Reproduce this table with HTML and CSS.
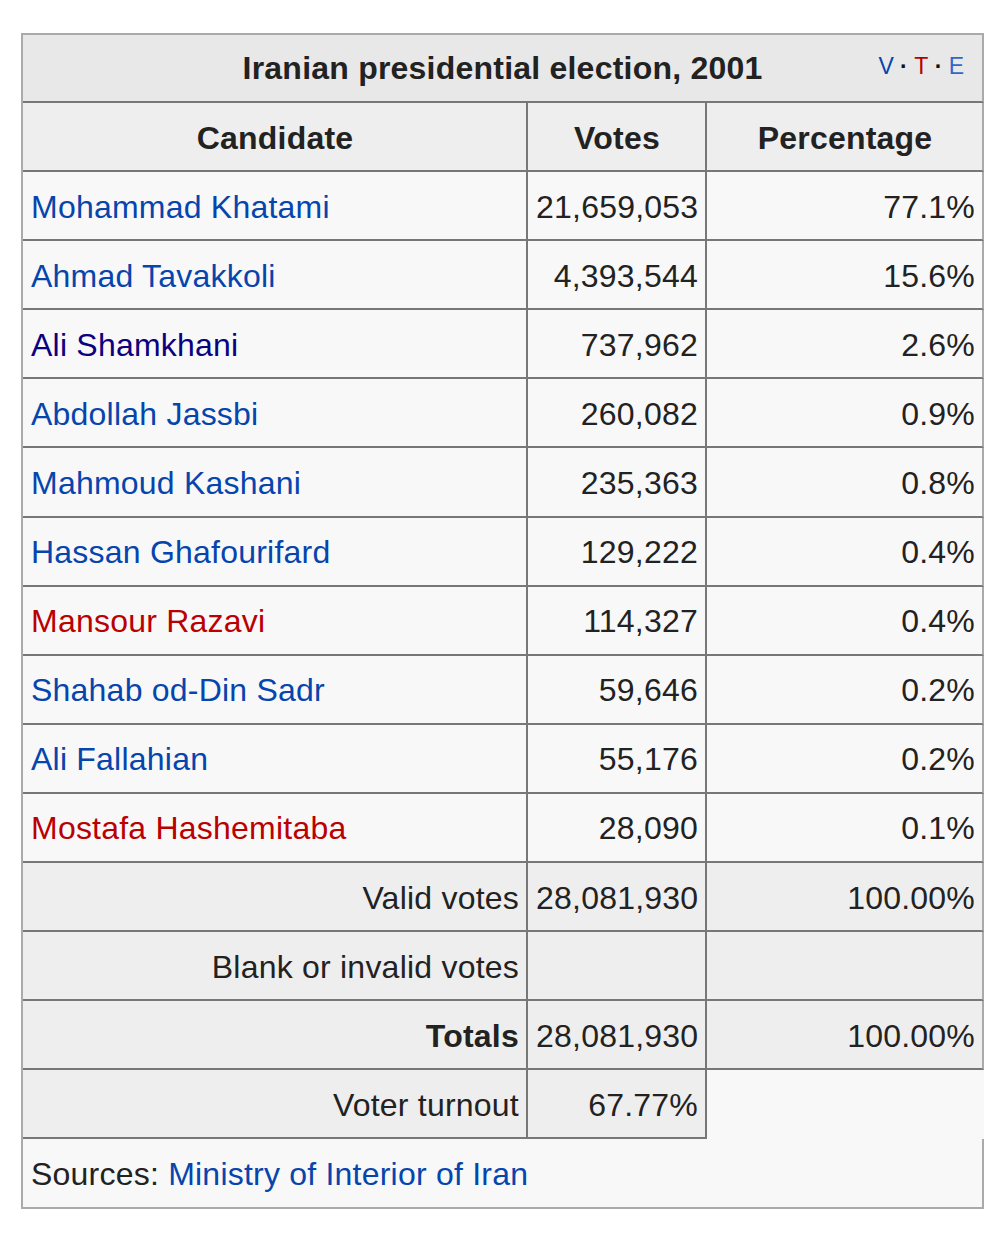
FILE: index.html
```html
<!DOCTYPE html>
<html lang="en">
<head>
<meta charset="utf-8">
<title>Iranian presidential election, 2001</title>
<link rel="stylesheet" href="styles.css">
</head>
<body>
<table class="results">
  <colgroup>
    <col class="c-cand">
    <col class="c-votes">
    <col class="c-pct">
  </colgroup>
  <tr class="title-row">
    <th colspan="3" class="title-cell">
      <div class="title-grid">
        <span class="title-text">Iranian presidential election, 2001</span>
        <span class="navbar"><a class="nv-v">V</a><b class="dot">·</b><a class="nv-t">T</a><b class="dot">·</b><a class="nv-e">E</a></span>
      </div>
    </th>
  </tr>
  <tr class="head-row">
    <th class="mid">Candidate</th>
    <th class="mid">Votes</th>
    <th class="mid last">Percentage</th>
  </tr>
  <tr class="body-row"><td><a class="link">Mohammad Khatami</a></td><td class="num">21,659,053</td><td class="num last">77.1%</td></tr>
  <tr class="body-row"><td><a class="link">Ahmad Tavakkoli</a></td><td class="num">4,393,544</td><td class="num last">15.6%</td></tr>
  <tr class="body-row"><td><a class="link visited">Ali Shamkhani</a></td><td class="num">737,962</td><td class="num last">2.6%</td></tr>
  <tr class="body-row"><td><a class="link">Abdollah Jassbi</a></td><td class="num">260,082</td><td class="num last">0.9%</td></tr>
  <tr class="body-row"><td><a class="link">Mahmoud Kashani</a></td><td class="num">235,363</td><td class="num last">0.8%</td></tr>
  <tr class="body-row"><td><a class="link">Hassan Ghafourifard</a></td><td class="num">129,222</td><td class="num last">0.4%</td></tr>
  <tr class="body-row"><td><a class="link new">Mansour Razavi</a></td><td class="num">114,327</td><td class="num last">0.4%</td></tr>
  <tr class="body-row"><td><a class="link">Shahab od-Din Sadr</a></td><td class="num">59,646</td><td class="num last">0.2%</td></tr>
  <tr class="body-row"><td><a class="link">Ali Fallahian</a></td><td class="num">55,176</td><td class="num last">0.2%</td></tr>
  <tr class="body-row"><td><a class="link new">Mostafa Hashemitaba</a></td><td class="num">28,090</td><td class="num last">0.1%</td></tr>
  <tr class="sum-row"><td class="num">Valid votes</td><td class="num">28,081,930</td><td class="num last">100.00%</td></tr>
  <tr class="sum-row"><td class="num">Blank or invalid votes</td><td class="num"></td><td class="num last"></td></tr>
  <tr class="sum-row"><td class="num"><b>Totals</b></td><td class="num">28,081,930</td><td class="num last">100.00%</td></tr>
  <tr class="sum-row"><td class="num">Voter turnout</td><td class="num">67.77%</td><td class="blank"></td></tr>
  <tr class="src-row">
    <td colspan="3" class="src-cell">Sources: <a class="link">Ministry of Interior of Iran</a></td>
  </tr>
</table>
</body>
</html>
```

FILE: styles.css
```css
html, body {
  margin: 0;
  padding: 0;
  background: #ffffff;
}

body {
  font-family: "Liberation Sans", Arial, sans-serif;
  font-size: 32px;
  color: #222222;
  letter-spacing: 0.22px;
}

.results {
  border-collapse: separate;
  border-spacing: 0;
  margin: 33px 0 0 21px;
  width: 963px;
  table-layout: fixed;
  background: #f8f8f8;
  border-top: 2px solid #aaaaaa;
  border-left: 2px solid #aaaaaa;
}

.c-cand { width: 505px; }
.c-votes { width: 179px; }
.c-pct { width: 277px; }

.results th,
.results td {
  box-sizing: border-box;
  height: 69.1px;
  padding: 3px 7px 0 8px;
  vertical-align: middle;
  border-right: 2px solid #777777;
  border-bottom: 2px solid #777777;
  white-space: nowrap;
  line-height: normal;
}

.results .last {
  border-right-color: #aaaaaa;
}

.title-row .title-cell {
  height: 68px;
  background: #e8e8e8;
  border-right-color: #aaaaaa;
  font-weight: bold;
  padding: 0 8px;
}

.title-grid {
  display: grid;
  grid-template-columns: 1fr auto 1fr;
  align-items: center;
}

.title-text {
  grid-column: 2;
}

.navbar {
  grid-column: 3;
  justify-self: end;
  margin-right: 10px;
  margin-top: -3px;
  font-size: 23px;
  font-weight: normal;
  letter-spacing: 0;
  white-space: pre;
}

.navbar .dot {
  font-weight: bold;
  color: #111111;
  padding: 0 6.4px;
}

.nv-v { color: #0645ad; }
.nv-t { color: #ba0000; }
.nv-e { color: #3366cc; }

.head-row th {
  background: #eeeeee;
  font-weight: bold;
}

.mid { text-align: center; }

.body-row td {
  background: #f8f8f8;
}

.num { text-align: right; }

.sum-row td {
  background: #eeeeee;
}

.sum-row td.blank {
  background: #f8f8f8;
  border-right-color: #f8f8f8;
  border-bottom-color: #f8f8f8;
}

.results .src-row .src-cell {
  height: 70px;
  background: #f8f8f8;
  border-right-color: #aaaaaa;
  border-bottom-color: #aaaaaa;
  text-align: left;
}

.link {
  color: #0645ad;
  text-decoration: none;
}

.link.visited { color: #0b0080; }
.link.new { color: #ba0000; }
```
